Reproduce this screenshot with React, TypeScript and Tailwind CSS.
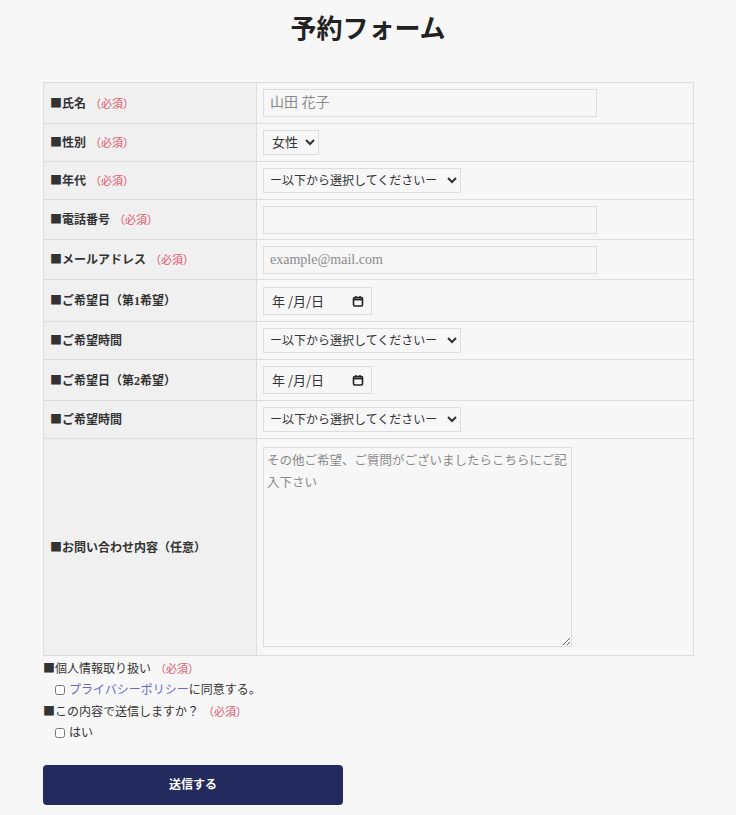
import React from 'react';

const SERIF = "font-['Liberation_Serif','Noto_Sans_CJK_JP',serif]";

type Row = { label: string; required?: boolean; h: string; field: React.ReactNode };

const inputCls =
  "block border border-[#dddddd] bg-[#f7f7f7] px-[6px] text-[14px] text-[#333] placeholder:text-[#8a8a8a] outline-none " + SERIF;

const TimeSelect: React.FC = () => (
  <select className={"h-[25px] w-[198px] border border-[#dddddd] bg-[#f7f7f7] pl-[2px] text-[12px] text-[#333] " + SERIF} defaultValue="">
    <option value="">ー以下から選択してくださいー</option>
    <option>10:00〜12:00</option>
    <option>13:00〜15:00</option>
    <option>15:00〜17:00</option>
  </select>
);

// date field drawn the way a Japanese-locale browser shows it
const DateInput: React.FC = () => (
  <div className="flex h-[28px] w-[109px] items-center justify-between border border-[#dddddd] bg-[#f7f7f7] pl-[8px] pr-[7px] text-[13px] text-[#333]">
    <span className="font-['Noto_Sans_CJK_JP',sans-serif]">年 /月/日</span>
    <svg width="12" height="12" viewBox="0 0 12 12" fill="none">
      <rect x="1.5" y="2.5" width="9" height="8.5" rx="1.2" stroke="#222" strokeWidth="1.6" />
      <path d="M1.5 4.5h9" stroke="#222" strokeWidth="1.8" />
      <path d="M4 1v2.5M8 1v2.5" stroke="#222" strokeWidth="1.4" />
    </svg>
  </div>
);

const Square = () => <span className="font-['Noto_Sans_CJK_JP',sans-serif] text-[#333]">■</span>;

const Required = () => <span className="ml-[4px] text-[11px] font-normal text-[#e0556a]">（必須）</span>;

const rows: Row[] = [
  { label: '氏名', required: true, h: 'h-[41px]', field: <input className={inputCls + ' h-[28px] w-[334px] text-[13px]'} placeholder="山田 花子" /> },
  {
    label: '性別', required: true, h: 'h-[38px]',
    field: (
      <select className={"h-[25px] w-[56px] border border-[#dddddd] bg-[#f7f7f7] pl-[4px] text-[13px] text-[#333] " + SERIF} defaultValue="女性">
        <option>女性</option>
        <option>男性</option>
      </select>
    ),
  },
  { label: '年代', required: true, h: 'h-[38px]', field: <TimeSelect /> },
  { label: '電話番号', required: true, h: 'h-[40px]', field: <input className={inputCls + ' h-[28px] w-[334px]'} /> },
  { label: 'メールアドレス', required: true, h: 'h-[40px]', field: <input className={inputCls + ' h-[28px] w-[334px]'} placeholder="example@mail.com" /> },
  { label: 'ご希望日（第1希望）', h: 'h-[42px]', field: <DateInput /> },
  { label: 'ご希望時間', h: 'h-[38px]', field: <TimeSelect /> },
  { label: 'ご希望日（第2希望）', h: 'h-[41px]', field: <DateInput /> },
  { label: 'ご希望時間', h: 'h-[38px]', field: <TimeSelect /> },
  {
    label: 'お問い合わせ内容（任意）', h: 'h-[217px]',
    field: (
      <textarea
        className={"block h-[200px] w-[309px] border border-[#dddddd] bg-[#f7f7f7] px-[3px] py-[2px] text-[12.5px] leading-[22px] text-[#333] placeholder:text-[#8a8a8a] outline-none " + SERIF}
        placeholder="その他ご希望、ご質問がございましたらこちらにご記入下さい"
      />
    ),
  },
];

export default function App() {
  return (
    <div className={"min-h-[815px] bg-[#f7f7f7] text-[#333] " + SERIF}>
      <h1 className="pt-[12px] text-center text-[26px] font-bold leading-[36px] text-[#222]">予約フォーム</h1>

      <div className="mx-[43px] mt-[34px] w-[651px]">
        <table className="w-full border-collapse">
          <tbody>
            {rows.map((r, i) => (
              <tr key={i} className={r.h}>
                <th className="w-[213px] border border-[#dddddd] bg-[#f0f0f0] px-[6px] text-left text-[12px] font-bold text-[#333]">
                  <Square />{r.label}
                  {r.required ? <Required /> : null}
                </th>
                <td className="border border-[#dddddd] bg-[#f7f7f7] px-[6px] align-middle">{r.field}</td>
              </tr>
            ))}
          </tbody>
        </table>

        <div className="mt-[3px] text-[12px] leading-[18px]">
          <p><Square />個人情報取り扱い<Required /></p>
          <label className="mt-[3px] flex items-center gap-[4px] pl-[12px]">
            <input type="checkbox" className="h-[10px] w-[10px]" />
            <span><span className="text-[#6868c8]">プライバシーポリシー</span>に同意する。</span>
          </label>
          <p className="mt-[3px]"><Square />この内容で送信しますか？<Required /></p>
          <label className="mt-[3px] flex items-center gap-[4px] pl-[12px]">
            <input type="checkbox" className="h-[10px] w-[10px]" />
            <span>はい</span>
          </label>
        </div>

        <button className="mt-[23px] flex h-[40px] w-[300px] items-center justify-center rounded-[4px] bg-[#232b5e] text-[12px] font-bold text-white">
          送信する
        </button>
      </div>
    </div>
  );
}
